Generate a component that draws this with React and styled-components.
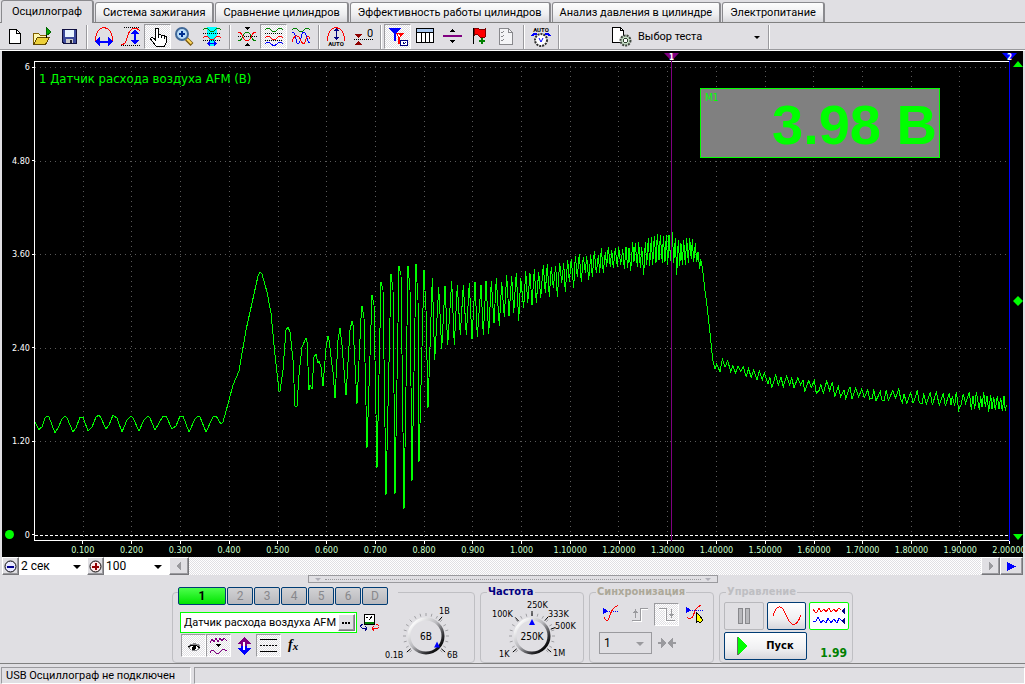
import React, { useState } from "react";
import styled, { createGlobalStyle, css } from "styled-components";

const face = "#e0dfe3";
const shade = "#9a9a9e";
const lime = "#00ff00";
const navy = "#003c74";
const uiFont = 'Roboto, "Liberation Sans", sans-serif';
const scaleFont = '"DejaVu Sans Condensed", "DejaVu Sans", sans-serif';

const dither = css`
  background: conic-gradient(#fff 25%, ${face} 0 50%, #fff 0 75%, ${face} 0) 0 0 / 2px 2px;
`;

const Global = createGlobalStyle`
  * { box-sizing: border-box; }
  body { margin: 0; background: ${face}; }
  button, input, select { font: inherit; color: inherit; margin: 0; padding: 0; border-radius: 0; }
  svg { display: block; flex: none; }
`;

const Window = styled.main`
  display: flex;
  flex-direction: column;
  min-height: 100vh;
  min-width: 840px;
  background: ${face};
  color: #000;
  font: 11px/14px ${uiFont};
`;

/* ---------- tabs ---------- */

const TabBar = styled.nav`
  display: flex;
  align-items: flex-end;
  gap: 1px;
  height: 23px;
  padding-left: 1px;
  border-bottom: 1px solid #808080;
`;

const Tab = styled.button`
  height: ${(p) => (p.$active ? 23 : 20)}px;
  padding: 0 ${(p) => (p.$active ? 10 : 7)}px;
  margin-bottom: ${(p) => (p.$active ? -1 : 0)}px;
  border: 1px solid #8a8a8e;
  border-right-width: 2px;
  border-bottom: 0;
  border-radius: 3px 3px 0 0;
  background: ${(p) => (p.$active ? face : "linear-gradient(#fdfdfd, #eeeef0 60%, #d8d8dc)")};
  white-space: nowrap;
`;

/* ---------- toolbar ---------- */

const ToolBar = styled.div`
  display: flex;
  align-items: center;
  height: 28px;
  padding: 0 1px;
  border-bottom: 1px solid #fff;
  box-shadow: inset 0 -1px 0 ${shade};
`;

const ToolButton = styled.button`
  display: flex;
  align-items: center;
  justify-content: center;
  width: 27px;
  height: 25px;
  border: 1px solid transparent;
  background: none;
  ${(p) =>
    p.$pressed &&
    css`
      ${dither}
      border-color: ${shade} #fff #fff ${shade};
    `}
`;

const Separator = styled.span`
  width: 2px;
  height: 24px;
  margin: 0 2px 0 4px;
  border-left: 1px solid ${shade};
  border-right: 1px solid #fff;
`;

const TestPicker = styled.label`
  display: flex;
  align-items: center;
  gap: 3px;
  margin-left: 49px;
`;

/* ---------- drop-down ---------- */

const SelectBox = styled.span`
  position: relative;
  display: block;
  width: ${(p) => p.$width}px;
  height: ${(p) => p.$height}px;
  background: ${(p) => (p.$white ? "#fff" : "transparent")};
  border: ${(p) => (p.$framed ? `1px solid ${shade}` : "0")};
  &::after {
    content: "";
    position: absolute;
    right: ${(p) => p.$arrow}px;
    top: 50%;
    margin-top: -1px;
    border: ${(p) => (p.$small ? 3 : 4)}px solid transparent;
    border-top-color: ${(p) => (p.$framed ? shade : "#000")};
    border-bottom: 0;
    pointer-events: none;
  }
`;

const NativeSelect = styled.select`
  appearance: none;
  width: 100%;
  height: 100%;
  padding-left: ${(p) => p.$pad || 2}px;
  border: 0;
  background: none;
  outline: 0;
  font-size: ${(p) => (p.$large ? 12 : 11)}px;
`;

function Select({ options, label, pad, large, ...box }) {
  return (
    <SelectBox {...box}>
      <NativeSelect aria-label={label} $pad={pad} $large={large}>
        {options.map((o) => (
          <option key={o}>{o}</option>
        ))}
      </NativeSelect>
    </SelectBox>
  );
}

/* ---------- oscillogram ---------- */

const Screen = styled.section`
  display: grid;
  grid-template-columns: 32px minmax(0, 1fr) 14px;
  grid-template-rows: 10px minmax(0, 1fr) 16px;
  flex: 1 0 300px;
  min-height: 300px;
  margin: 0 2px;
  background: #000;
  overflow: hidden;
  font-family: ${scaleFont};
`;

const VoltAxis = styled.div`
  grid-area: 2 / 1;
  position: relative;
  display: flex;
  flex-direction: column;
  justify-content: space-between;
  align-items: flex-end;
  color: #fff;
  font-size: 9px;
  line-height: 12px;
`;

const VoltLabel = styled.span`
  display: flex;
  align-items: center;
  gap: 2px;
  &::after {
    content: "";
    width: 2px;
    height: 1px;
    background: #fff;
  }
`;

const ZeroDot = styled.i`
  position: absolute;
  left: 3px;
  bottom: 2px;
  width: 9px;
  height: 9px;
  border-radius: 50%;
  background: ${lime};
`;

const TimeAxis = styled.div`
  grid-area: 3 / 2;
  display: grid;
  grid-template-columns: repeat(20, 1fr);
  margin: 0 -2.5% 0 2.5%;
  color: #ccffcc;
  font-size: 9px;
  line-height: 12px;
`;

const TimeLabel = styled.span`
  display: flex;
  flex-direction: column;
  align-items: center;
  &::before {
    content: "";
    width: 1px;
    height: 3px;
    background: #fff;
  }
`;

const Plot = styled.div`
  grid-area: 2 / 2;
  position: relative;
  & > svg {
    width: 100%;
    height: 100%;
    overflow: visible;
  }
  & > svg * {
    vector-effect: non-scaling-stroke;
  }
`;

const ChannelTitle = styled.h1`
  position: absolute;
  left: 5px;
  top: 10px;
  margin: 0;
  color: ${lime};
  font-size: 13px;
  line-height: 16px;
  font-weight: 400;
`;

const Meter = styled.div`
  position: absolute;
  right: 69px;
  top: 27px;
  width: 240px;
  height: 70px;
  padding: 3px 2px 3px 4px;
  border: 1px solid ${lime};
  background: #808080;
  color: ${lime};
  font: 10px/12px ${scaleFont};
`;

const MeterValue = styled.output`
  display: block;
  font: bold 56px/42px "Liberation Sans", sans-serif;
  text-align: right;
`;

const Cursor = styled.div`
  position: absolute;
  top: -8px;
  bottom: 0;
  left: ${(p) => p.$at}%;
  width: 15px;
  margin-left: -7px;
  display: flex;
  flex-direction: column;
  align-items: center;
  &::after {
    content: "";
    flex: 1;
    width: 1px;
    background: ${(p) => p.$color};
  }
`;

const RangeMarks = styled.div`
  grid-area: 2 / 3;
  display: flex;
  flex-direction: column;
  justify-content: space-between;
  align-items: center;
  padding-left: 3px;
`;

const plotLeft = 34;
const plotTop = 61;

// Slow part of the signal: [x, y] pairs.
const slow = [
  35, 422, 39, 430, 41, 427, 42, 427, 45, 418, 47, 416, 49, 417, 55, 433, 58, 428, 62, 419, 65, 416, 67, 418, 73, 432,
  76, 428, 80, 417, 83, 417, 88, 431, 92, 427, 96, 417, 99, 415, 101, 418, 106, 429, 109, 425, 113, 415, 117, 418, 122,
  432, 127, 420, 131, 416, 133, 418, 139, 431, 144, 420, 148, 416, 150, 418, 155, 430, 159, 423, 163, 416, 166, 416,
  172, 429, 176, 426, 180, 416, 183, 416, 189, 432, 195, 419, 198, 416, 200, 417, 206, 432, 213, 417, 216, 416, 221,
  424, 223, 422, 228, 404, 233, 385, 239, 371, 246, 330, 252, 303, 258, 276, 260, 272, 262, 274, 267, 292, 271, 313,
  275, 355, 279, 391, 280, 391, 283, 370, 286, 330, 288, 327, 290, 332, 293, 360, 295, 406, 297, 406, 299, 375, 302,
  347, 306, 338, 307, 342, 309, 390, 310, 385, 312, 389, 314, 357, 316, 354, 318, 363, 319, 361, 321, 367, 323, 386,
  326, 348, 328, 336, 329, 340, 332, 365, 333, 372, 335, 398, 338, 340, 340, 328, 342, 345, 346, 395, 350, 330, 352,
  321, 353, 325, 357, 404, 361, 318, 362, 306, 364, 318, 367, 448, 372, 295, 374, 305, 377, 468, 381, 282, 383, 290,
  386, 495, 391, 274, 393, 290, 395, 494, 399, 266, 401, 275, 404, 509, 408, 266, 410, 290, 412, 481, 416, 264, 418,
  300, 419, 462, 424, 270, 426, 310, 428, 408,
];

// Fast parts, sampled at three steps per unit.
const ripple = [
  7, 173, 14, 420, 26, 202, 35, 386, 45, 198, 53, 375, 65, 183, 73, 375, 82, 195, 91, 345, 100, 195, 109, 345, 118,
  190, 126, 358, 135, 186, 142, 352, 153, 195, 160, 345, 168, 183, 176, 342, 184, 183, 192, 310, 199, 175, 208, 318,
  215, 186, 223, 290, 230, 165, 237, 288, 245, 168, 251, 278, 259, 158, 266, 303, 272, 175, 281, 265, 287, 153, 293,
  248, 300, 160, 306, 255, 313, 148, 319, 248, 326, 155, 332, 235, 340, 135, 346, 218, 352, 133, 358, 230, 364, 140,
  370, 203, 377, 137, 382, 230, 389, 128, 395, 190, 401, 128, 406, 215, 413, 120, 418, 185, 424, 118, 431, 203, 436,
  108, 442, 170, 448, 102, 454, 185, 460, 110, 466, 158, 470, 108, 476, 180, 482, 105, 487, 172, 493, 93, 499, 160,
  505, 105, 509, 158, 514, 85, 520, 158, 526, 95, 530, 140, 535, 80, 541, 140, 545, 90, 550, 143, 556, 85, 562, 140,
  566, 82, 572, 135, 578, 88, 583, 147, 588, 82, 593, 143, 597, 85, 602, 152, 608, 65, 612, 125, 616, 70, 622, 140,
  626, 67, 631, 143, 635, 80, 641, 165, 646, 65, 650, 135, 655, 55, 659, 138, 664, 52, 668, 135, 673, 48, 678, 128,
  682, 42, 687, 120, 691, 45, 697, 128, 700, 48, 705, 125, 709, 45, 713, 135, 717, 45, 722, 122, 727, 35, 731, 128,
  736, 55, 740, 165, 745, 60, 749, 138, 753, 70, 757, 135, 761, 60, 766, 135, 770, 55, 775, 128, 779, 55, 784, 118,
  787, 58, 791, 125, 796, 70, 800, 127, 804, 95, 809, 147, 812, 118, 818, 150, 824, 205, 832, 265, 840, 340, 848, 420,
];

const tail = [
  45, 118, 50, 103, 60, 125, 67, 88, 75, 112, 83, 92, 92, 125, 98, 107, 107, 130, 114, 108, 122, 125, 130, 110, 139,
  142, 145, 115, 154, 142, 161, 120, 171, 150, 178, 122, 187, 150, 193, 128, 204, 162, 209, 140, 215, 175, 227, 135,
  235, 165, 243, 142, 250, 170, 260, 137, 269, 165, 275, 142, 282, 175, 293, 143, 302, 165, 309, 150, 314, 185, 326,
  152, 334, 172, 343, 152, 349, 190, 358, 180, 362, 162, 370, 190, 380, 153, 389, 182, 397, 155, 404, 200, 415, 170,
  422, 200, 432, 180, 437, 205, 450, 170, 456, 208, 467, 175, 476, 202, 485, 176, 493, 203, 503, 180, 509, 207, 517,
  205, 521, 178, 528, 212, 541, 185, 545, 210, 552, 213, 559, 180, 565, 212, 578, 182, 587, 205, 596, 175, 602, 208,
  607, 218, 612, 192, 620, 220, 632, 188, 639, 218, 644, 208, 652, 180, 658, 218, 666, 222, 671, 190, 679, 222, 691,
  187, 697, 225, 709, 187, 718, 225, 730, 190, 736, 228, 748, 190, 753, 225, 757, 198, 764, 228, 769, 185, 776, 240,
  783, 225, 790, 192, 797, 220, 808, 185, 814, 240, 819, 198, 824, 238, 829, 185, 838, 240, 842, 198, 846, 232, 851,
  185, 856, 230, 861, 198, 866, 245, 872, 195, 876, 238, 881, 200, 886, 240, 892, 197, 897, 238, 902, 203, 907, 243,
  912, 197, 916, 243, 919, 225,
];

const pairs = (list, x0, y0, step) => {
  const out = [];
  for (let i = 0; i < list.length; i += 2) {
    out.push(`${(x0 + list[i] / step).toFixed(1)},${(y0 + list[i + 1] / step).toFixed(1)}`);
  }
  return out;
};

const signal = [...pairs(slow, 0, 0, 1), ...pairs(ripple, 430, 220, 3), ...pairs(tail, 700, 330, 3)].join(" ");

const volts = ["6", "4.80", "3.60", "2.40", "1.20", "0"];
const times = Array.from({ length: 20 }, (_, i) => ((i + 1) / 10).toFixed(i < 10 ? 3 : 5));

function Oscillogram() {
  return (
    <Screen aria-label="Осциллограмма">
      <VoltAxis>
        {volts.map((v) => (
          <VoltLabel key={v}>{v}</VoltLabel>
        ))}
        <ZeroDot />
      </VoltAxis>
      <Plot>
        <svg viewBox={`${plotLeft} ${plotTop} 975 480`} preserveAspectRatio="none" shapeRendering="crispEdges" fill="none">
          <g stroke="#5a5a5a" strokeDasharray="1 4">
            {times.slice(0, 19).map((t, i) => {
              const x = plotLeft + Math.round(48.7 * (i + 1)) + 0.5;
              return <line key={t} x1={x} x2={x} y1="66" y2="540" />;
            })}
            {[67, 161, 254, 348, 441].map((y) => (
              <line key={y} x1="35" x2="1008" y1={y + 0.5} y2={y + 0.5} />
            ))}
          </g>
          <line x1="35" x2="1008" y1="535.5" y2="535.5" stroke="#fff" strokeDasharray="3 2" />
          <path d="M1009 61.5H34.5V540.5H1009" stroke="#fff" />
          <polyline points={signal} stroke={lime} />
        </svg>
        <ChannelTitle>1 Датчик расхода воздуха AFM (В)</ChannelTitle>
        <Cursor $at={65.3} $color="#800080">
          <CursorFlag color="#800080" n="1" />
        </Cursor>
        <Cursor $at={100} $color="#0000ff">
          <CursorFlag color="#0000ff" n="2" />
        </Cursor>
        <Meter>
          M1
          <MeterValue>3.98 В</MeterValue>
        </Meter>
      </Plot>
      <RangeMarks>
        <svg width="10" height="7" fill={lime}><path d="M5 0L10 6H0Z" /></svg>
        <svg width="10" height="10" fill={lime}><path d="M5 0L10 5L5 10L0 5Z" /></svg>
        <svg width="10" height="7" fill={lime}><path d="M0 0H10L5 6Z" /></svg>
      </RangeMarks>
      <TimeAxis>
        {times.map((t) => (
          <TimeLabel key={t}>{t}</TimeLabel>
        ))}
      </TimeAxis>
    </Screen>
  );
}

function CursorFlag({ color, n }) {
  return (
    <svg width="15" height="8">
      <path d="M0 0H15L8 7.500H7Z" fill={color} />
      <text x="7.500" y="7" fill="#fff" fontSize="8" fontWeight="bold" textAnchor="middle">{n}</text>
    </svg>
  );
}

/* ---------- scroll row ---------- */

const ScrollRow = styled.div`
  display: flex;
  height: 18px;
  margin: 0 2px;
`;

const BevelButton = styled.button`
  display: flex;
  align-items: center;
  justify-content: center;
  width: ${(p) => p.$width || 17}px;
  border: 1px solid #fff;
  border-right-color: #77777b;
  border-bottom-color: #77777b;
  background: ${face};
  box-shadow: inset -1px -1px 0 ${shade};
`;

const Track = styled.div`
  flex: 1;
  ${dither}
`;

const Splitter = styled.div`
  display: flex;
  align-items: center;
  justify-content: space-between;
  width: 40%;
  height: 8px;
  margin: 0 auto;
  padding: 0 6px;
  border: 1px solid ${shade};
  &::before,
  &::after {
    content: "";
    border: 3px solid transparent;
    border-top-color: #b0b0b8;
    border-bottom: 0;
  }
`;

const SplitterDots = styled.span`
  flex: 1;
  margin: 0 4px;
  border-top: 1px dotted ${shade};
`;

/* ---------- control panel ---------- */

const Controls = styled.div`
  display: flex;
  justify-content: center;
  align-items: flex-end;
  gap: 5px;
  height: 80px;
`;

const Group = styled.fieldset`
  width: ${(p) => p.$width}px;
  min-width: 0;
  height: ${(p) => (p.$untitled ? 71 : 78)}px;
  margin: 0;
  padding: 0 3px;
  border: 1px solid #bfbfc3;
  border-radius: 4px;
`;

const GroupTitle = styled.legend`
  margin-left: 3px;
  padding: 0 1px;
  color: ${(p) => p.$color};
  font: bold 11px/14px ${scaleFont};
`;

const Row = styled.div`
  display: flex;
  align-items: ${(p) => p.$align || "center"};
  justify-content: ${(p) => p.$justify || "flex-start"};
  gap: ${(p) => p.$gap || 0}px;
  margin-top: ${(p) => p.$top || 0}px;
  padding-left: ${(p) => p.$indent || 0}px;
`;

const Channels = styled.div`
  display: flex;
  gap: 1px;
  width: 220px;
  height: 18px;
  margin: -6px 0 0 2px;
  background: ${face};
`;

const ChannelButton = styled.button`
  width: ${(p) => (p.$active ? 48 : 26)}px;
  border: 1px solid ${navy};
  border-radius: 2px;
  background: ${(p) => (p.$active ? "linear-gradient(#4cff4c, #00e400)" : "linear-gradient(#d2d2d4, #b8b8bc)")};
  color: ${(p) => (p.$active ? "#000" : "#88888c")};
  font-size: 12px;
  font-weight: ${(p) => (p.$active ? "bold" : "normal")};
  line-height: 14px;
`;

const ChannelSettings = styled.div`
  width: 206px;
  padding-left: 2px;
`;

const SensorField = styled.div`
  display: flex;
  width: 177px;
  height: 21px;
  padding: 1px;
  border: 1px solid ${lime};
  background: #fff;
`;

const SensorInput = styled.input`
  flex: 1;
  min-width: 0;
  padding-left: 2px;
  border: 0;
  outline: 0;
  background: none;
`;

const MiniButton = styled(ToolButton)`
  width: 25px;
  height: 23px;
`;

const PlainButton = styled(ToolButton)`
  width: 20px;
  height: 21px;
`;

const PanelButton = styled.button`
  display: flex;
  align-items: center;
  justify-content: center;
  gap: 18px;
  width: ${(p) => p.$width}px;
  height: 28px;
  border: 1px solid ${(p) => (p.$live ? lime : p.$muted ? "#b8b8bc" : navy)};
  border-radius: 2px;
  background: ${(p) => (p.$live ? "#fff" : p.$muted ? face : "linear-gradient(#fff, #f0f0f2 60%, #d6d6dc)")};
  font: bold 11px/14px ${scaleFont};
`;

const Elapsed = styled.output`
  flex: 1;
  align-self: flex-end;
  padding-right: 2px;
  color: #008000;
  font: bold 12px/14px ${scaleFont};
  text-align: right;
`;

const StatusBar = styled.footer`
  display: flex;
  gap: 3px;
  height: 21px;
  padding: 3px 0 0 1px;
  border-top: 1px solid #808080;
`;

const StatusCell = styled.span`
  flex: ${(p) => (p.$grow ? "1" : "0 0 190px")};
  padding: 1px 4px;
  border: 1px solid ${shade};
  border-right-color: #fff;
  border-bottom-color: #fff;
  white-space: nowrap;
`;

const DialFace = styled.svg`
  overflow: visible;
  font-family: ${scaleFont};
`;

function Dial({ id, width, height, cx, cy, value, labels, pointer }) {
  const ray = (deg, r) => {
    const a = (deg * Math.PI) / 180;
    return [cx + r * Math.sin(a), cy - r * Math.cos(a)];
  };
  const ticks = Array.from({ length: 19 }, (_, i) => -135 + i * 15);
  const [px, py] = ray(pointer, 14);
  return (
    <DialFace width={width} height={height} role="img" aria-label={value}>
      <defs>
        <linearGradient id={id} x1="0.1" y1="0.1" x2="0.9" y2="0.9">
          <stop offset="0" stopColor="#fff" />
          <stop offset="0.45" stopColor="#b8b8bc" />
          <stop offset="0.8" stopColor="#303034" />
          <stop offset="1" stopColor="#000" />
        </linearGradient>
      </defs>
      {ticks.map((t) => {
        const [x1, y1] = ray(t, 20);
        const [x2, y2] = ray(t, 23);
        return <line key={t} x1={x1} y1={y1} x2={x2} y2={y2} stroke="#a0a0a4" />;
      })}
      {labels.map(([text, x, y, deg]) => {
        const [x1, y1] = ray(deg, 20);
        const [x2, y2] = ray(deg, 25);
        return (
          <g key={text}>
            <line x1={x1} y1={y1} x2={x2} y2={y2} stroke="#000" />
            <text x={x} y={y} fontSize="9">{text}</text>
          </g>
        );
      })}
      <circle cx={cx} cy={cy} r="17" fill={face} stroke={`url(#${id})`} strokeWidth="3" />
      <path d="M0 -3L3 3H-3Z" fill="#00f" transform={`translate(${px} ${py})`} />
      <text x={cx} y={cy + 4} fontSize="10" textAnchor="middle">{value}</text>
    </DialFace>
  );
}

/* ---------- icons ---------- */

function Icon({ children, w = 20, h = 20 }) {
  return (
    <svg width={w} height={h} viewBox={`0 0 ${w} ${h}`} fill="none" stroke="#000" shapeRendering="crispEdges" aria-hidden="true">
      {children}
    </svg>
  );
}

const dots = "1 1";
const tiny = { fontSize: 6, fontWeight: "bold", textAnchor: "middle", stroke: "none" };

const icons = {
  doc: (
    <Icon>
      <path d="M4.500 2.500H11.500L15.500 6.500V16.500H4.500Z" fill="#fff" />
      <path d="M11.500 2.500V6.500H15.500" />
    </Icon>
  ),
  open: (
    <Icon>
      <path d="M1.500 17.500V6.500H6.500L8.500 8.500H14.500V11" fill="#fff8b0" stroke="#806000" />
      <path d="M1.500 17.500L5.500 10.500H17.500L13.500 17.500Z" fill="#ecd03a" stroke="#604800" />
      <path d="M14 0L19 5L14 9Z" fill="#0a0" stroke="#060" />
      <path d="M14.500 8V11" />
    </Icon>
  ),
  save: (
    <Icon>
      <path d="M3.500 2.500H17V16.500H5L3.500 15Z" fill="#3c4a9c" stroke="#101040" />
      <rect x="6" y="3" width="9" height="7" fill="#e8f4ff" stroke="none" />
      <rect x="7" y="12" width="7" height="4" fill="#ccc" stroke="none" />
      <rect x="11" y="13" width="2" height="3" fill="#223" stroke="none" />
    </Icon>
  ),
  width: (
    <Icon>
      <path d="M1.500 14V11Q3 1.500 10 0.500Q17 1.500 18.500 11V14" stroke="#f00" />
      <path d="M4 14.500H16" stroke="#00f" strokeWidth="2" />
      <path d="M1 14.500L6 10V19ZM19 14.500L14 10V19Z" fill="#00f" stroke="none" />
    </Icon>
  ),
  height: (
    <Icon>
      <path d="M3 0.500H19M0 18.500H19" strokeDasharray={dots} />
      <path d="M0 17.500Q5 18 6.500 9.500Q9 0 16 1.500L19 4" stroke="#f00" />
      <path d="M14 5V15" stroke="#00f" strokeWidth="2" />
      <path d="M14 2L18 7H10ZM14 18L18 13H10Z" fill="#00f" stroke="none" />
    </Icon>
  ),
  hand: (
    <Icon>
      <path
        d="M7.500 11.500V2.500Q7.500 1 9 1Q10.500 1 10.500 2.500V8Q12 6.500 13.500 8.500Q15 7.500 16 9Q18.500 8.500 18.500 11V15L16.500 19.500H8.500L3.500 13.500Q2 11 4 10.500Q5.500 10.500 7.500 13Z"
        fill="#fff"
      />
      <path d="M10.500 8V11M13.500 8.500V11M16 9V12" />
    </Icon>
  ),
  zoom: (
    <Icon>
      <circle cx="7" cy="7" r="6" fill="#b8dcf8" stroke="#406898" strokeWidth="2" shapeRendering="auto" />
      <path d="M7 4V10M4 7H10" stroke="#003090" strokeWidth="2" />
      <path d="M11.500 12L17 17.500" stroke="#7a5a10" strokeWidth="4" shapeRendering="auto" />
      <path d="M12 12L16.500 16.500" stroke="#ffd860" strokeWidth="2" shapeRendering="auto" />
    </Icon>
  ),
  band: (
    <Icon>
      <path d="M5 0H15V8L13 12V19H7V12L5 8Z" fill="#0ff" stroke="none" />
      <path d="M1 3Q4 -1 7 3T13 3T19 3" stroke="#008000" />
      <path d="M1 6.500H19M1 13.500H19" strokeDasharray={dots} />
      <path d="M1 11Q4 7 7 11T13 11T19 11" stroke="#f00" />
      <path d="M7 16.500H13" stroke="#00f" />
      <path d="M5 16.500L8 14V19ZM15 16.500L12 14V19Z" fill="#00f" stroke="none" />
    </Icon>
  ),
  eyeWaves: (
    <Icon>
      <path d="M7 0H13L10 3ZM7 19H13L10 16Z" fill="#000" stroke="none" />
      <path d="M1 9.500H20" strokeDasharray={dots} />
      <path d="M1 14Q4 14 6 9Q10 1 14 9Q16 14 19 14" stroke="#008000" />
      <path d="M1 5Q4 5 6 10Q10 18 14 10Q16 5 19 5" stroke="#f00" />
    </Icon>
  ),
  threeWaves: (
    <Icon>
      <path d="M1 3Q4 -1 7 3T13 3T19 3" stroke="#008000" />
      <path d="M1 6.500H19M1 13.500H19" strokeDasharray={dots} />
      <path d="M1 11Q4 7 7 11T13 11T19 11" stroke="#f00" />
      <path d="M1 17Q4 14 7 17T13 17T19 17" stroke="#00f" />
    </Icon>
  ),
  overlap: (
    <Icon>
      <path d="M1 3Q4 -1 7 3T13 3T19 3" stroke="#008000" />
      <path d="M1 5Q4 5 5 12Q7 22 10 11Q12 1 15 8Q17 16 19 16" stroke="#00f" />
      <path d="M1 15Q3 8 6 9Q8 9 10 14Q13 20 15 12Q17 7 19 12" stroke="#f00" />
    </Icon>
  ),
  autoArc: (
    <Icon>
      <path d="M1.500 14V11Q3 1.500 10 0.500Q17 1.500 18.500 11V14" stroke="#f00" />
      <path d="M10.500 2V11" stroke="#000080" />
      <path d="M10.500 1L13 4H8ZM10.500 13L13 10H8Z" fill="#000080" stroke="none" />
      <text x="10" y="19" fill="#000" {...tiny}>AUTO</text>
    </Icon>
  ),
  zero: (
    <Icon>
      <path d="M2 7H9L5.500 11ZM2 18H9L5.500 14Z" fill="#900000" stroke="none" />
      <path d="M1 12.500H20" strokeDasharray={dots} />
      <text x="17" y="10" fontSize="11" textAnchor="middle" fill="#000" stroke="none">0</text>
    </Icon>
  ),
  filter: (
    <Icon>
      <path d="M1 1H13L8 7V14H6V7Z" fill="#00f" stroke="none" />
      <path d="M8 6H17L12 10V17H10V10Z" fill="#f00" stroke="none" />
      <path d="M10 7L12 10" stroke="#fff" />
      <rect x="12.500" y="13.500" width="7" height="5" fill="#fff" stroke="#000080" />
      <path d="M15 15L16 17L18 15" stroke="#000080" />
    </Icon>
  ),
  table: (
    <Icon>
      <rect x="1.500" y="1.500" width="17" height="14" fill="#fff" />
      <rect x="2" y="2" width="16" height="3" fill="#a8c8f0" stroke="none" />
      <path d="M1 5.500H19M6.500 5V16M10.500 5V16M14.500 5V16" />
    </Icon>
  ),
  level: (
    <Icon>
      <path d="M10 2L13 5H7ZM10 16L13 13H7Z" fill="#000" stroke="none" />
      <path d="M1 9H20" stroke="#800080" strokeWidth="2" />
    </Icon>
  ),
  flag: (
    <Icon>
      <path d="M4.500 1V17" />
      <path d="M5 2Q8 0 10 2T16 2V10Q13 12 10 9T5 9Z" fill="#f00" stroke="#800000" />
      <path d="M13 11V17M10 14H16" stroke="#008000" strokeWidth="2" />
    </Icon>
  ),
  checklist: (
    <Icon>
      <path d="M3.500 1.500H12.500L16.500 5.500V17.500H3.500Z" fill="#f4f4f6" stroke="#88888c" />
      <path d="M12.500 1.500V5.500H16.500M5 5L6 6L8 4M5 9L6 10L8 8M5 13L6 14L8 12" stroke="#88888c" />
    </Icon>
  ),
  autoKnob: (
    <Icon>
      <text x="10" y="5" fill="#000" {...tiny}>AUTO</text>
      <circle cx="10" cy="13" r="6" fill="#fff" stroke="#303030" strokeWidth="2" shapeRendering="auto" strokeDasharray="2 1" />
      <path d="M8 11L10 15L12 11" stroke="#00f" shapeRendering="auto" />
      <path d="M1 9Q3 6 6 7M19 9Q17 6 14 7" stroke="#00f" strokeWidth="2" />
    </Icon>
  ),
  test: (
    <Icon w={22}>
      <path d="M1.500 0.500H9.500L12.500 3.500V15.500H1.500Z" fill="#fff" />
      <path d="M9.500 0.500V3.500H12.500" />
      <circle cx="14.500" cy="13.500" r="5" fill="#c4dcc4" strokeWidth="2" strokeDasharray="2 1" stroke="#404840" shapeRendering="auto" />
      <circle cx="14.500" cy="13.500" r="2" fill="#fff" stroke="#304030" />
    </Icon>
  ),
  minus: (
    <Icon w={13} h={13}>
      <circle cx="6.500" cy="6.500" r="5.500" shapeRendering="auto" fill="#e8e8ff" />
      <path d="M3 6.500H10" stroke="#000090" strokeWidth="2" />
    </Icon>
  ),
  plus: (
    <Icon w={13} h={13}>
      <circle cx="6.500" cy="6.500" r="5.500" shapeRendering="auto" fill="#ffe8e8" />
      <path d="M3 6.500H10M6.500 3V10" stroke="#900000" strokeWidth="2" />
    </Icon>
  ),
  left: <Icon w={6} h={8}><path d="M5 0V8L0 4Z" fill={shade} stroke="none" /></Icon>,
  right: <Icon w={6} h={8}><path d="M1 0V8L6 4Z" fill={shade} stroke="none" /></Icon>,
  run: <Icon w={9} h={9}><path d="M0 0V9L9 4.500Z" fill="#00f" stroke="none" /></Icon>,
  eye: (
    <Icon>
      <path d="M4 10Q9 5 16 9V13Q10 17 5 13Z" fill="#88888c" stroke="none" />
      <ellipse cx="10" cy="12" rx="4" ry="2" fill="#fff" stroke="none" />
      <circle cx="10" cy="12" r="2" fill="#000" stroke="none" />
      <path d="M4 11Q10 7 16 12" strokeWidth="1" />
    </Icon>
  ),
  smooth: (
    <Icon>
      <path d="M1 7L3 3L5 6L7 2L9 6L11 2L13 5L15 2L18 5" stroke="#800080" />
      <path d="M7 8H12L9.500 11Z" fill="#000" stroke="none" />
      <path d="M1 17Q3 12 6 16T11 16T18 15" stroke="#800080" />
    </Icon>
  ),
  updown: (
    <Icon>
      <path d="M10 1L17 8H13V10H7V8H3Z" fill="#800080" stroke="none" />
      <path d="M10 19L17 12H13V10H7V12H3Z" fill="#00f" stroke="none" />
      <path d="M10 6V14" stroke="#fff" strokeWidth="2" />
    </Icon>
  ),
  lines: (
    <Icon>
      <path d="M1 3.500H18M1 15.500H18" />
      <path d="M1 9.500H18" strokeDasharray="2 1" />
    </Icon>
  ),
  fx: (
    <Icon>
      <text x="4" y="13" fontFamily="Liberation Serif, serif" fontStyle="italic" fontWeight="bold" fontSize="14" fill="#000" stroke="none">
        f<tspan fontSize="11" dy="1">x</tspan>
      </text>
    </Icon>
  ),
  device: (
    <Icon>
      <rect x="4.500" y="1.500" width="10" height="10" fill="#fff" />
      <path d="M5 10H14" stroke="#008000" strokeWidth="2" />
      <path d="M6 4H8M9.500 7L12 3" />
      <path d="M3 11Q-1 13 2 15H7M5 13L7 15L5 18" stroke="#000080" />
      <path d="M16 11Q21 13 18 15H12M14 13L12 15L14 18" stroke="#f00" />
    </Icon>
  ),
  trigger: (
    <Icon>
      <path d="M2 2.500V9.500L7 6Z" fill="#00f" stroke="none" />
      <path d="M2 6.500H18" stroke="#00f" strokeDasharray="1 1" />
      <path d="M3 12Q6 19 8.500 12Q11 2 17 0.500" stroke="#f00" />
    </Icon>
  ),
  rise: (
    <Icon>
      <path d="M3 15.500H11.500V3.500H19" stroke={shade} />
      <path d="M4 16.500H12.500V4.500H19" stroke="#fff" />
      <path d="M6.500 13V5" stroke={shade} />
      <path d="M6.500 4L9 8H4Z" fill={shade} stroke="none" />
    </Icon>
  ),
  fall: (
    <Icon>
      <path d="M2 3.500H9.500V15.500H18" stroke={shade} />
      <path d="M2 4.500H8.500V16.500H18" stroke="#fff" />
      <path d="M14.500 4V12" stroke={shade} />
      <path d="M14.500 13L17 9H12Z" fill={shade} stroke="none" />
    </Icon>
  ),
  triggerPick: (
    <Icon>
      <path d="M1 1.500V8.500L6 5Z" fill="#00f" stroke="none" />
      <path d="M1 5.500H18" stroke="#00f" strokeDasharray="1 1" />
      <path d="M2 12Q6 16 8.500 10Q11 1 16 0.500" stroke="#f00" />
      <path d="M11 7V18L13 16L15 18L18 15L15 11Z" fill="#ff0" />
    </Icon>
  ),
  converge: (
    <Icon>
      <path d="M1 10H9M11 10H19" stroke={shade} strokeWidth="2" />
      <path d="M10 10L4 5V15ZM10 10L16 5V15Z" fill={shade} stroke="none" />
    </Icon>
  ),
  pause: (
    <Icon w={12} h={16}>
      <path d="M0.500 0.500H4.500V15.500H0.500ZM7.500 0.500H11.500V15.500H7.500Z" fill="#b8b8bc" stroke="#88888c" />
    </Icon>
  ),
  sine: (
    <Icon w={30} h={20}>
      <path d="M1 10Q7 -8 14 9Q22 28 29 9" stroke="#f00" />
    </Icon>
  ),
  waves: (
    <Icon w={32} h={20}>
      <path d="M0 3L2 6L4 6L6 2L8 6L11 3L13 6L16 2L18 6L21 3L23 6L26 2L28 4" stroke="#f00" />
      <path d="M0 15H3L5 11L8 17L10 14L13 17L15 12L18 17L21 13L24 17L26 12L29 15" stroke="#00f" />
      <path d="M32 1V8L28 5ZM32 11V18L28 15Z" fill="#000080" stroke="none" />
    </Icon>
  ),
  play: (
    <Icon w={11} h={18}>
      <path d="M1 0V18L11 9Z" fill={lime} stroke="none" />
      <path d="M0.500 0V18L3 16" stroke="#607060" />
    </Icon>
  ),
};

const tools = [
  [["doc", "Новый"], ["open", "Открыть"], ["save", "Сохранить"]],
  [["width", "Ширина"], ["height", "Высота"], ["hand", "Рука", true], ["zoom", "Масштаб"], ["band", "Диапазон"]],
  [["eyeWaves", "Сжать"], ["threeWaves", "Разнести", true], ["overlap", "Совместить"]],
  [["autoArc", "Автомасштаб"], ["zero", "Ноль"]],
  [["filter", "Маркеры", true], ["table", "Таблица"], ["level", "Уровень"], ["flag", "Флаг"], ["checklist", "Список"]],
  [["autoKnob", "Автонастройка"]],
];

const tabs = [
  "Осциллограф",
  "Система зажигания",
  "Сравнение цилиндров",
  "Эффективность работы цилиндров",
  "Анализ давления в цилиндре",
  "Электропитание",
];

export default function App() {
  const [tab, setTab] = useState(0);
  const [channel, setChannel] = useState("1");
  const [sensor, setSensor] = useState("Датчик расхода воздуха AFM");

  return (
    <Window>
      <Global />
      <TabBar role="tablist">
        {tabs.map((t, i) => (
          <Tab key={t} role="tab" aria-selected={i === tab} $active={i === tab} onClick={() => setTab(i)}>
            {t}
          </Tab>
        ))}
      </TabBar>

      <ToolBar role="toolbar">
        {tools.map((group, g) => (
          <React.Fragment key={g}>
            {group.map(([icon, label, pressed]) => (
              <ToolButton key={icon} aria-label={label} aria-pressed={!!pressed} $pressed={pressed}>
                {icons[icon]}
              </ToolButton>
            ))}
            <Separator />
          </React.Fragment>
        ))}
        <TestPicker>
          {icons.test}
          <Select label="Выбор теста" options={["Выбор теста"]} $width={128} $height={20} $arrow={4} $small />
        </TestPicker>
        <Separator />
      </ToolBar>

      <Oscillogram />

      <ScrollRow>
        <BevelButton aria-label="Уменьшить">{icons.minus}</BevelButton>
        <Select label="Время" options={["2 сек"]} $width={68} $height={18} $arrow={6} $white large />
        <BevelButton aria-label="Увеличить">{icons.plus}</BevelButton>
        <Select label="Масштаб, %" options={["100"]} $width={65} $height={18} $arrow={7} $white large />
        <BevelButton aria-label="Назад" $width={20}>{icons.left}</BevelButton>
        <Track />
        <BevelButton aria-label="Вперёд" $width={19}>{icons.right}</BevelButton>
        <BevelButton aria-label="В конец" $width={23}>{icons.run}</BevelButton>
      </ScrollRow>
      <Splitter>
        <SplitterDots />
      </Splitter>

      <Controls>
        <Group $width={303} $untitled aria-label="Каналы">
          <Channels>
            {["1", "2", "3", "4", "5", "6", "D"].map((c) => (
              <ChannelButton key={c} $active={c === channel} onClick={() => setChannel(c)}>
                {c}
              </ChannelButton>
            ))}
          </Channels>
          <Row $align="flex-start" $indent={2}>
            <ChannelSettings>
              <Row $top={7} $gap={3}>
                <SensorField>
                  <SensorInput aria-label="Датчик" value={sensor} onChange={(e) => setSensor(e.target.value)} />
                  <BevelButton aria-label="Выбрать датчик">
                    <svg width="9" height="2"><path d="M0 1H2M3 1H5M6 1H8" stroke="#000" strokeWidth="2" /></svg>
                  </BevelButton>
                </SensorField>
                <PlainButton aria-label="Устройство">{icons.device}</PlainButton>
              </Row>
              <Row $top={1} $indent={1}>
                <MiniButton aria-label="Показать" $pressed>{icons.eye}</MiniButton>
                <MiniButton aria-label="Сглаживание" $pressed>{icons.smooth}</MiniButton>
                <MiniButton aria-label="Инверсия">{icons.updown}</MiniButton>
                <MiniButton aria-label="Линии" $pressed>{icons.lines}</MiniButton>
                <MiniButton aria-label="Функция">{icons.fx}</MiniButton>
              </Row>
            </ChannelSettings>
            <Dial
              id="voltRing"
              width={88}
              height={56}
              cx={43}
              cy={31}
              value="6В"
              pointer={128}
              labels={[["1В", 56, 9, 40], ["0.1В", 2, 53, -130], ["6В", 64, 53, 130]]}
            />
          </Row>
        </Group>

        <Group $width={104}>
          <GroupTitle $color="#000080">Частота</GroupTitle>
          <Dial
            id="rateRing"
            width={96}
            height={62}
            cx={48}
            cy={37}
            value="250K"
            pointer={0}
            labels={[
              ["250K", 43, 9, 0],
              ["100K", 8, 18, -42],
              ["333K", 64, 18, 40],
              ["500K", 71, 30, 70],
              ["1K", 15, 58, -130],
              ["1M", 69, 57, 130],
            ]}
          />
        </Group>

        <Group $width={125}>
          <GroupTitle $color="#aca899">Синхронизация</GroupTitle>
          <Row $top={4} $indent={5} $gap={3}>
            <MiniButton aria-label="Уровень синхронизации">{icons.trigger}</MiniButton>
            <MiniButton aria-label="По фронту">{icons.rise}</MiniButton>
            <MiniButton aria-label="По спаду" $pressed>{icons.fall}</MiniButton>
            <MiniButton aria-label="Выбрать уровень">{icons.triggerPick}</MiniButton>
          </Row>
          <Row $top={6} $indent={6} $gap={5}>
            <Select label="Канал синхронизации" options={["1"]} $width={53} $height={22} $arrow={7} $framed pad={4} large />
            {icons.converge}
          </Row>
        </Group>

        <Group $width={134}>
          <GroupTitle $color="#bebec2">Управление</GroupTitle>
          <Row $top={3} $indent={1} $gap={3}>
            <PanelButton $width={40} $muted aria-label="Пауза">{icons.pause}</PanelButton>
            <PanelButton $width={40} aria-label="Синусоида">{icons.sine}</PanelButton>
            <PanelButton $width={40} $live aria-label="Каналы">{icons.waves}</PanelButton>
          </Row>
          <Row $top={2} $indent={1}>
            <PanelButton $width={83}>
              {icons.play}
              Пуск
            </PanelButton>
            <Elapsed>1.99</Elapsed>
          </Row>
        </Group>
      </Controls>

      <StatusBar>
        <StatusCell>USB Осциллограф не подключен</StatusCell>
        <StatusCell $grow />
      </StatusBar>
    </Window>
  );
}
